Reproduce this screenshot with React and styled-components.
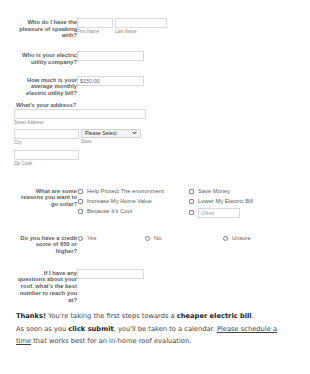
import React from "react";
import styled, { createGlobalStyle } from "styled-components";

const Global = createGlobalStyle`
  html, body { margin: 0; padding: 0; background: #fff; }
  body { font-family: "Liberation Sans", Arial, sans-serif; }
`;

const Page = styled.div`
  width: 310px;
  height: 374px;
  box-sizing: border-box;
  padding: 18px 0 0 14px;
  overflow: hidden;
`;

const Row = styled.div`
  display: grid;
  grid-template-columns: 63px 1fr;
  align-items: start;
  margin-top: ${p => p.gap || 0}px;
`;

const Label = styled.div`
  font-size: 5.8px;
  line-height: 6.7px;
  font-weight: bold;
  color: #5c5c5c;
  text-align: right;
  padding-top: ${p => p.top || 0}px;
`;

const Heading = styled.div`
  font-size: 5.8px;
  line-height: 7px;
  font-weight: bold;
  color: #5c5c5c;
  margin: ${p => p.gap}px 0 0 2px;
`;

const Field = styled.div`
  display: flex;
  flex-direction: column;
  margin-top: ${p => p.top || 0}px;
`;

const Fields = styled.div`
  display: flex;
  gap: ${p => p.gap || 2}px;
  margin-top: ${p => p.top || 0}px;
`;

const Input = styled.div`
  box-sizing: border-box;
  width: ${p => p.w}px;
  height: 10px;
  border: 1px solid #d8d8d8;
  background: #fff;
  font-size: 5.4px;
  line-height: 8px;
  color: ${p => p.muted ? "#999" : "#666"};
  padding-left: 2px;
`;

const Sub = styled.div`
  font-size: 4.5px;
  line-height: 5px;
  color: #8a8a8a;
  margin-top: 1px;
`;

const Select = styled.div`
  box-sizing: border-box;
  width: 60px;
  height: 9px;
  border: 1px solid #d0d0d0;
  background: #f4f4f4;
  font-size: 5.2px;
  line-height: 7px;
  color: #333;
  padding: 0 3px 0 3px;
  display: flex;
  justify-content: space-between;
  align-items: center;
`;

const Options = styled.div`
  display: grid;
  grid-template-columns: 111px 1fr;
  row-gap: 3px;
  padding-left: 1px;
`;

const Option = styled.div`
  display: flex;
  align-items: center;
  gap: 4px;
  height: ${p => p.h || 7}px;
  font-size: 5.8px;
  color: #5c5c5c;
  white-space: nowrap;
`;

const Box = styled.span`
  box-sizing: border-box;
  width: 5px;
  height: 5px;
  border: 0.8px solid #888;
  border-radius: ${p => (p.round ? "50%" : "1px")};
  flex: none;
`;

const Radios = styled.div`
  display: grid;
  grid-template-columns: 67px 78px 1fr;
  padding-left: 1px;
`;

const Note = styled.p`
  margin: ${p => p.gap}px 0 0 2px;
  width: 272px;
  font-family: "Comic Sans MS", "DejaVu Sans", sans-serif;
  font-size: 6.7px;
  line-height: 12px;
  color: #444;
  b { color: #222; }
  u { text-decoration: underline; }
`;

const Chevron = () => (
  <svg width="5" height="4" viewBox="0 0 10 8">
    <path d="M1 1.5 L5 5.5 L9 1.5" fill="none" stroke="#222" strokeWidth="2" />
  </svg>
);

export default function App() {
  return (
    <Page>
      <Global />
      <Row>
        <Label top={1}>Who do I have the<br />pleasure of speaking<br />with?</Label>
        <Fields>
          <Field>
            <Input w={36} />
            <Sub>First Name</Sub>
          </Field>
          <Field>
            <Input w={52} />
            <Sub>Last Name</Sub>
          </Field>
        </Fields>
      </Row>

      <Row gap={12}>
        <Label top={1}>Who is your electric<br />utility company?</Label>
        <Input w={67} />
      </Row>

      <Row gap={10}>
        <Label top={1}>How much is your<br />average monthly<br />electric utility bill?</Label>
        <Input w={67}>$150.00</Input>
      </Row>

      <Heading gap={5}>What's your address?</Heading>
      <Field>
        <Input w={132} />
        <Sub>Street Address</Sub>
      </Field>
      <Fields gap={2} top={4}>
        <Field>
          <Input w={65} />
          <Sub>City</Sub>
        </Field>
        <Field>
          <Select>Please Select<Chevron /></Select>
          <Sub>State</Sub>
        </Field>
      </Fields>
      <Field top={5}>
        <Input w={65} />
        <Sub>Zip Code</Sub>
      </Field>

      <Row gap={22}>
        <Label>What are some<br />reasons you want to<br />go solar?</Label>
        <Options>
          <Option><Box />Help Protect The environment</Option>
          <Option><Box />Save Money</Option>
          <Option><Box />Increase My Home Value</Option>
          <Option><Box />Lower My Electric Bill</Option>
          <Option><Box />Because It's Cool</Option>
          <Option h={10}><Box /><Input w={42} muted>Other</Input></Option>
        </Options>
      </Row>

      <Row gap={17}>
        <Label>Do you have a credit<br />score of 650 or<br />higher?</Label>
        <Radios>
          <Option><Box round />Yes</Option>
          <Option><Box round />No</Option>
          <Option><Box round />Unsure</Option>
        </Radios>
      </Row>

      <Row gap={14}>
        <Label top={1}>If I have any<br />questions about your<br />roof, what's the best<br />number to reach you<br />at?</Label>
        <Input w={67} />
      </Row>

      <Note gap={7}>
        <b>Thanks!</b> You're taking the first steps towards a <b>cheaper electric bill</b>.
      </Note>
      <Note gap={1}>
        As soon as you <b>click submit</b>, you'll be taken to a calendar. <u>Please schedule a time</u> that works best for an in-home roof evaluation.
      </Note>
    </Page>
  );
}
